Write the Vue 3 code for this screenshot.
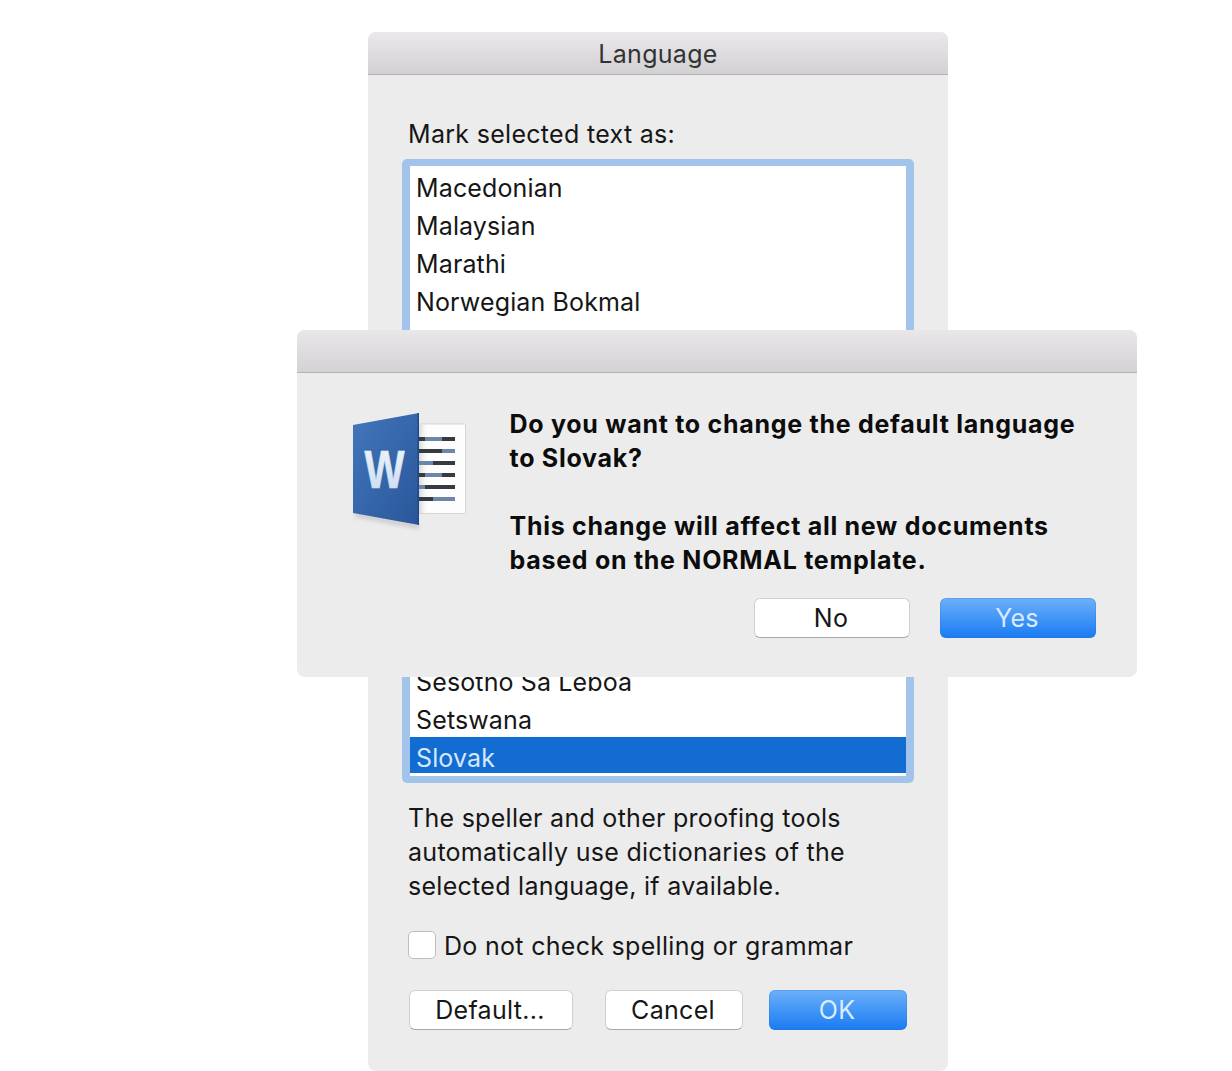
<script setup>
const topRows = ['Macedonian', 'Malaysian', 'Marathi', 'Norwegian Bokmal']
const bottomRows = ['Sesotho Sa Leboa', 'Setswana']
</script>

<template>
  <div class="page">
    <section class="window">
      <header class="titlebar"><span class="title">Language</span></header>
      <div class="body">
        <p class="label">Mark selected text as:</p>
        <div class="list">
          <div v-for="r in topRows" :key="r" class="row">{{ r }}</div>
          <div class="hidden-rows"></div>
          <div v-for="r in bottomRows" :key="r" class="row">{{ r }}</div>
          <div class="row selected">Slovak</div>
        </div>
        <p class="note">The speller and other proofing tools<br />automatically use dictionaries of the<br />selected language, if available.</p>
        <label class="check">
          <span class="box"></span>
          <span class="check-text">Do not check spelling or grammar</span>
        </label>
        <div class="actions">
          <button class="btn default-btn">Default...</button>
          <button class="btn cancel-btn">Cancel</button>
          <button class="btn primary ok-btn">OK</button>
        </div>
      </div>
    </section>

    <section class="alert">
      <div class="alert-bar"></div>
      <div class="alert-body">
        <svg class="word" width="140" height="140" viewBox="340 400 140 140" aria-hidden="true">
          <defs>
            <linearGradient id="cover" x1="0" y1="0" x2="1" y2="1">
              <stop offset="0" stop-color="#4276bc" />
              <stop offset="1" stop-color="#2a5699" />
            </linearGradient>
            <linearGradient id="shade" x1="0" y1="0" x2="1" y2="0">
              <stop offset="0" stop-color="#9a9a9a" stop-opacity=".4" />
              <stop offset="1" stop-color="#ffffff" stop-opacity="0" />
            </linearGradient>
            <linearGradient id="wfill" x1="0" y1="0" x2="0" y2="1">
              <stop offset="0" stop-color="#f2f6fb" />
              <stop offset="1" stop-color="#c9daf0" />
            </linearGradient>
            <filter id="soft" x="-20%" y="-20%" width="140%" height="160%">
              <feGaussianBlur stdDeviation="2" />
            </filter>
          </defs>
          <polygon points="355,512 419,524 419,529 355,517" fill="#8a8a8a" opacity=".35" filter="url(#soft)" />
          <rect x="416" y="424" width="49.500" height="89.500" rx="1" fill="#fdfdfd" stroke="#c9c9c9" stroke-width=".7" />
          <rect x="419" y="424.500" width="10" height="88.500" fill="url(#shade)" />
          <g>
            <rect x="419" y="437" width="36" height="4" fill="#363b42" />
            <rect x="425" y="437" width="17" height="4" fill="#6b86a8" />
            <rect x="419" y="449" width="36" height="4" fill="#363b42" />
            <rect x="442" y="449" width="13" height="4" fill="#6b86a8" />
            <rect x="419" y="461" width="36" height="4" fill="#363b42" />
            <rect x="419" y="461" width="14" height="4" fill="#6b86a8" />
            <rect x="419" y="473" width="36" height="4" fill="#363b42" />
            <rect x="425" y="473" width="17" height="4" fill="#6b86a8" />
            <rect x="419" y="485" width="36" height="4" fill="#363b42" />
            <rect x="419" y="485" width="6" height="4" fill="#6b86a8" />
            <rect x="419" y="497" width="36" height="4" fill="#363b42" />
            <rect x="433" y="497" width="22" height="4" fill="#6b86a8" />
          </g>
          <polygon points="353,425 419,413 419,525 353,513" fill="url(#cover)" />
          <polygon points="417.500,413.300 419,413 419,525 417.500,524.700" fill="#1f4a8a" />
          <text x="364.500" y="488" class="w" textLength="40" lengthAdjust="spacingAndGlyphs" fill="url(#wfill)" stroke="url(#wfill)" stroke-width=".6">W</text>
        </svg>
        <div class="alert-text">
          <p>Do you want to change the default language<br />to Slovak?</p>
          <p>This change will affect all new documents<br />based on the NORMAL template.</p>
        </div>
        <div class="alert-actions">
          <button class="btn no-btn">No</button>
          <button class="btn primary yes-btn">Yes</button>
        </div>
      </div>
    </section>
  </div>
</template>

<style>
html, body { margin: 0; background: #fff; }
</style>

<style scoped>
.page {
  position: relative;
  height: 1071px;
  overflow: hidden;
  padding-top: 32px;
  padding-left: 368px;
  box-sizing: border-box;
  font-family: Inter, "Liberation Sans", sans-serif;
  font-size: 25px;
  color: #161616;
}
p { margin: 0; }
.window {
  width: 580px;
  height: 1039px;
  background: #ececec;
  border-radius: 8px;
  overflow: hidden;
}
.titlebar {
  height: 42px;
  border-bottom: 1px solid #b4b3b4;
  background: linear-gradient(#ebe9eb, #d2d0d2);
  display: flex;
  align-items: center;
  justify-content: center;
}
.title { color: #333; padding-top: 2px; letter-spacing: .3px; }
.body { padding: 42px 34px 0; display: flex; flex-direction: column; }
.label { line-height: 34px; margin-left: 6px; letter-spacing: .3px; }
.list {
  width: 512px;
  height: 624px;
  margin-top: 8px;
  box-sizing: border-box;
  border: 7px solid #a2c4ea;
  border-left-width: 8px;
  border-right-width: 8px;
  border-radius: 5px;
  background: #fff;
  padding-top: 3px;
  overflow: hidden;
}
.row { height: 38px; line-height: 38px; padding-left: 6px; white-space: nowrap; letter-spacing: .13px; }
.hidden-rows { height: 342px; }
.selected {
  height: 36px;
  line-height: 42px;
  margin-top: -2px;
  background: #136cd2;
  color: #d6e8fb;
  overflow: hidden;
}
.note { margin-top: 18px; margin-left: 6px; line-height: 34px; letter-spacing: .28px; }
.check {
  display: flex;
  align-items: center;
  gap: 8px;
  margin-top: 28px;
  margin-left: 6px;
  height: 28px;
}
.check-text { padding-top: 2px; letter-spacing: .3px; }
.box {
  width: 26px;
  height: 26px;
  background: #fff;
  border: 1px solid #bdbdbd;
  border-radius: 5px;
}
.actions { display: flex; margin-top: 31px; margin-left: 7px; }
.btn {
  height: 40px;
  padding: 0 2px 0 0;
  box-sizing: border-box;
  font: inherit;
  letter-spacing: .3px;
  color: #161616;
  background: #fff;
  border: 1px solid #d0d0d0;
  border-bottom-color: #a9a9a9;
  border-radius: 6px;
}
.primary {
  color: #d9ecff;
  border: 0;
  background: linear-gradient(#6cb0fa, #1a7bf2);
  box-shadow: inset 0 0 0 1px rgba(40, 110, 210, .25);
}
.default-btn { width: 164px; }
.cancel-btn { width: 138px; margin-left: 32px; }
.ok-btn { width: 138px; margin-left: 26px; }

.alert {
  position: absolute;
  left: 297px;
  top: 330px;
  width: 840px;
  height: 347px;
  background: #ececec;
  border-radius: 8px;
  overflow: hidden;
}
.alert-bar {
  height: 42px;
  border-bottom: 1px solid #b4b3b4;
  background: linear-gradient(#e9e7e9, #d4d2d4);
}
.alert-body {
  display: grid;
  grid-template-columns: 212.500px auto;
  padding-top: 34px;
}
.word { position: absolute; left: 43px; top: 70px; }
.alert-text {
  grid-column: 2;
  font-weight: 700;
  line-height: 34px;
  color: #0c0c0c;
  letter-spacing: .72px;
}
.alert-text p + p { margin-top: 34px; }
.alert-actions {
  grid-column: 1 / 3;
  display: flex;
  justify-content: flex-end;
  gap: 30px;
  padding-right: 41px;
  margin-top: 21px;
}
.no-btn, .yes-btn { width: 156px; }
.w {
  font-family: "Liberation Sans", sans-serif;
  font-size: 54px;
  font-weight: 700;
}
</style>
